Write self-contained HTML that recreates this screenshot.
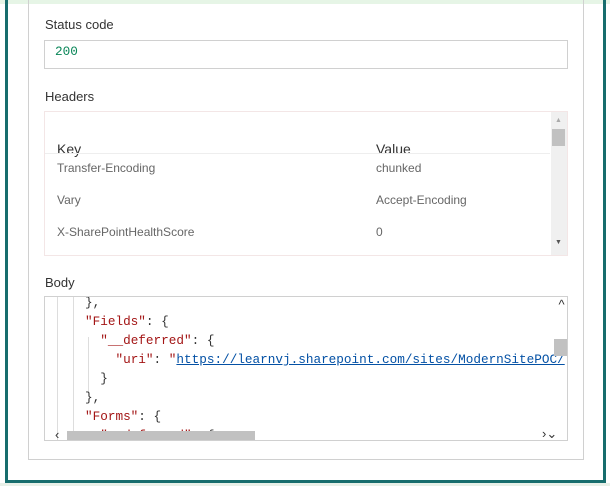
<!DOCTYPE html>
<html><head><style>
*{margin:0;padding:0;box-sizing:border-box}
body{width:610px;height:486px;background:#fff;position:relative;overflow:hidden;font-family:"Liberation Sans",sans-serif}
.abs{position:absolute}
.lbl{position:absolute;left:45px;font-size:13px;color:#333}
.code{font-family:"Liberation Mono",monospace;font-size:12.7px;white-space:pre;position:absolute;color:#333}
.r{color:#a31515}
.u{color:#0451a5;text-decoration:underline}
.t{font-size:12px;color:#666;position:absolute}
</style></head><body>
<div class="abs" style="left:0;top:0;width:610px;height:4px;background:#e6f5e6"></div>
<div class="abs" style="left:5px;top:0;width:601px;height:483px;border:3px solid #176d6d;border-top:none"></div>
<div class="abs" style="left:0;top:483px;width:610px;height:3px;background:#e8f0e8"></div>
<div class="abs" style="left:28px;top:0;width:556px;height:460px;border:1px solid #d0d0d0;border-top:none"></div>

<div class="lbl" style="top:17px">Status code</div>
<div class="abs" style="left:44px;top:40px;width:524px;height:29px;border:1px solid #d0d0d0"></div>
<div class="code" style="left:55px;top:44px;color:#098658">200</div>

<div class="lbl" style="top:89px">Headers</div>
<div class="abs" style="left:44px;top:111px;width:524px;height:145px;border:1px solid #f3e6e6"></div>
<div class="abs" style="left:551px;top:112px;width:16px;height:143px;background:#f0f0f0"></div>
<div class="abs" style="left:552px;top:129px;width:13px;height:17px;background:#c1c1c1"></div>
<div class="abs" style="left:555px;top:117px;font-size:7px;color:#aaa">▲</div>
<div class="abs" style="left:555px;top:239px;font-size:7px;color:#555">▼</div>
<div class="abs" style="left:57px;top:141px;font-size:14px;color:#333">Key</div>
<div class="abs" style="left:376px;top:141px;font-size:14px;color:#333">Value</div>
<div class="abs" style="left:45px;top:153px;width:505px;height:1px;background:#eee"></div>
<div class="t" style="left:57px;top:161px">Transfer-Encoding</div>
<div class="t" style="left:376px;top:161px">chunked</div>
<div class="t" style="left:57px;top:193px">Vary</div>
<div class="t" style="left:376px;top:193px">Accept-Encoding</div>
<div class="t" style="left:57px;top:225px">X-SharePointHealthScore</div>
<div class="t" style="left:376px;top:225px">0</div>

<div class="lbl" style="top:275px">Body</div>
<div class="abs" style="left:44px;top:296px;width:524px;height:145px;border:1px solid #d0d0d0;overflow:hidden">
 <div class="abs" style="left:12px;top:0;width:1px;height:145px;background:#ddd"></div>
 <div class="abs" style="left:28px;top:0;width:1px;height:145px;background:#ddd"></div>
 <div class="abs" style="left:43px;top:40px;width:1px;height:56px;background:#ddd"></div>
 <div class="abs" style="left:43px;top:135px;width:1px;height:10px;background:#ddd"></div>
 <div class="code" style="left:40px;top:-4px;line-height:19px">},
<span class="r">"Fields"</span>: {
  <span class="r">"__deferred"</span>: {
    <span class="r">"uri"</span>: <span class="r">"</span><span class="u">https://learnvj.sharepoint.com/sites/ModernSitePOC/</span>
  }
},
<span class="r">"Forms"</span>: {
  <span class="r">"__deferred"</span>: {</div>
 <div class="abs" style="left:509px;top:42px;width:14px;height:17px;background:#c1c1c1"></div>
 <div class="abs" style="left:22px;top:134px;width:188px;height:10px;background:#c1c1c1"></div>
 <div class="abs" style="left:509px;top:0;width:15px;height:18px;background:#fff;font-size:13px;color:#333;text-align:center">^</div>
 <div class="abs" style="left:10px;top:130px;font-size:13px;color:#333">‹</div>
 <div class="abs" style="left:497px;top:129px;font-size:13px;color:#333">›⌄</div>
</div>
</body></html>
